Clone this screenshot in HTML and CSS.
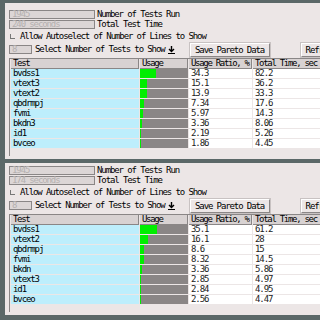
FILE: index.html
```html
<!DOCTYPE html>
<html lang="en">
<head>
    <meta charset="UTF-8">
    <title>Pareto</title>
    <link rel="stylesheet" href="styles.css">
</head>
<body>

    <div class="panel panel_first">
        <div class="info_row">
            <div class="entry entry_wide">1945</div>
            <span class="label">Number of Tests Run</span>
        </div>
        <div class="info_row">
            <div class="entry entry_wide">240 seconds</div>
            <span class="label">Total Test Time</span>
        </div>
        <div class="check_row">
            <span class="checkbox"></span>
            <span class="label">Allow Autoselect of Number of Lines to Show</span>
        </div>
        <div class="select_row">
            <div class="entry entry_small">8</div>
            <span class="label">Select Number of Tests to Show</span>
            <svg class="down_icon" width="7" height="8" viewBox="0 0 7 8"><path d="M3.5 0v5M1 3l2.5 2.5L6 3" stroke="#000" stroke-width="1.4" fill="none"/><path d="M0 7.5h7" stroke="#000" stroke-width="1"/></svg>
            <button class="btn save_btn">Save Pareto Data</button>
            <button class="btn ref_btn">Refresh</button>
        </div>
        <div class="table_frame">
            <div class="grid">
                <div class="head">Test</div><div class="head">Usage</div><div class="head">Usage Ratio, %</div><div class="head">Total Time, sec</div>
                <div class="name">bvdss1</div><div class="usage"><span class="bar" style="width:34.3%"></span></div><div class="num">34.3</div><div class="num">82.2</div>
                <div class="name">vtext3</div><div class="usage"><span class="bar" style="width:15.1%"></span></div><div class="num">15.1</div><div class="num">36.2</div>
                <div class="name">vtext2</div><div class="usage"><span class="bar" style="width:13.9%"></span></div><div class="num">13.9</div><div class="num">33.3</div>
                <div class="name">qbdrmpj</div><div class="usage"><span class="bar" style="width:7.34%"></span></div><div class="num">7.34</div><div class="num">17.6</div>
                <div class="name">fvmi</div><div class="usage"><span class="bar" style="width:5.97%"></span></div><div class="num">5.97</div><div class="num">14.3</div>
                <div class="name">bkdn3</div><div class="usage"><span class="bar" style="width:3.36%"></span></div><div class="num">3.36</div><div class="num">8.06</div>
                <div class="name">id1</div><div class="usage"><span class="bar" style="width:2.19%"></span></div><div class="num">2.19</div><div class="num">5.26</div>
                <div class="name">bvceo</div><div class="usage"><span class="bar" style="width:1.86%"></span></div><div class="num">1.86</div><div class="num">4.45</div>
            </div>
        </div>
    </div>

    <div class="panel panel_second">
        <div class="info_row">
            <div class="entry entry_wide">1945</div>
            <span class="label">Number of Tests Run</span>
        </div>
        <div class="info_row">
            <div class="entry entry_wide">174 seconds</div>
            <span class="label">Total Test Time</span>
        </div>
        <div class="check_row">
            <span class="checkbox"></span>
            <span class="label">Allow Autoselect of Number of Lines to Show</span>
        </div>
        <div class="select_row">
            <div class="entry entry_small">8</div>
            <span class="label">Select Number of Tests to Show</span>
            <svg class="down_icon" width="7" height="8" viewBox="0 0 7 8"><path d="M3.5 0v5M1 3l2.5 2.5L6 3" stroke="#000" stroke-width="1.4" fill="none"/><path d="M0 7.5h7" stroke="#000" stroke-width="1"/></svg>
            <button class="btn save_btn">Save Pareto Data</button>
            <button class="btn ref_btn">Refresh</button>
        </div>
        <div class="table_frame">
            <div class="grid">
                <div class="head">Test</div><div class="head">Usage</div><div class="head">Usage Ratio, %</div><div class="head">Total Time, sec</div>
                <div class="name">bvdss1</div><div class="usage"><span class="bar" style="width:35.1%"></span></div><div class="num">35.1</div><div class="num">61.2</div>
                <div class="name">vtext2</div><div class="usage"><span class="bar" style="width:16.1%"></span></div><div class="num">16.1</div><div class="num">28</div>
                <div class="name">qbdrmpj</div><div class="usage"><span class="bar" style="width:8.6%"></span></div><div class="num">8.6</div><div class="num">15</div>
                <div class="name">fvmi</div><div class="usage"><span class="bar" style="width:8.32%"></span></div><div class="num">8.32</div><div class="num">14.5</div>
                <div class="name">bkdn</div><div class="usage"><span class="bar" style="width:3.36%"></span></div><div class="num">3.36</div><div class="num">5.86</div>
                <div class="name">vtext3</div><div class="usage"><span class="bar" style="width:2.85%"></span></div><div class="num">2.85</div><div class="num">4.97</div>
                <div class="name">id1</div><div class="usage"><span class="bar" style="width:2.84%"></span></div><div class="num">2.84</div><div class="num">4.95</div>
                <div class="name">bvceo</div><div class="usage"><span class="bar" style="width:2.56%"></span></div><div class="num">2.56</div><div class="num">4.47</div>
            </div>
        </div>
    </div>

</body>
</html>
```

FILE: styles.css
```css
body {
    margin: 0;
    padding: 3px 0 0 5px;
    background: #5b6868;
    font-family: "DejaVu Sans Mono", monospace;
    font-size: 9px;
    letter-spacing: -1.1px;
    color: #000;
    height: 320px;
    overflow: hidden;
}

.panel {
    background: #ece6e6;
    display: flex;
    flex-direction: column;
    overflow: hidden;
}

.panel_first {
    padding: 6px 0 3px 4px;
    margin-bottom: 4px;
}

.panel_second {
    padding: 2px 0 3px 4px;
}

.info_row {
    display: flex;
    align-items: center;
    gap: 2px;
    height: 10px;
}

.entry {
    box-sizing: border-box;
    height: 9px;
    background: #dcd6d6;
    border: 1px solid #8a8686;
    color: #b4b0b0;
    line-height: 7px;
    padding-left: 2px;
    white-space: nowrap;
}

.entry_wide {
    width: 86px;
    flex: none;
}

.entry_small {
    width: 23px;
    flex: none;
}

.label {
    white-space: nowrap;
    line-height: 9px;
}

.check_row {
    display: flex;
    align-items: center;
    gap: 5px;
    height: 13px;
    margin-top: 1px;
    padding-left: 1px;
}

.checkbox {
    width: 4px;
    height: 4px;
    border-left: 1px solid #777;
    border-bottom: 1px solid #777;
}

.select_row {
    display: flex;
    align-items: center;
    height: 13px;
}

.select_row .label {
    margin-left: 3px;
}

.down_icon {
    margin-left: 3px;
    flex: none;
}

.btn {
    font-family: inherit;
    font-size: 9px;
    letter-spacing: -1.1px;
    height: 14px;
    padding: 0;
    background: #ece6e6;
    border: 1px solid;
    border-color: #fff #8a8686 #8a8686 #fff;
    box-shadow: 0 0 0 1px #c8c2c2;
    color: #000;
    white-space: nowrap;
    flex: none;
}

.save_btn {
    width: 80px;
    margin-left: 15px;
}

.ref_btn {
    width: 40px;
    margin-left: 31px;
    text-align: left;
    padding-left: 4px;
}

.table_frame {
    margin-top: 2px;
    border-left: 1px solid #8a8686;
    border-top: 1px solid #8a8686;
    padding: 0 0 8px 1px;
}

.panel_second .table_frame {
    padding-bottom: 8px;
}

.grid {
    display: grid;
    grid-template-columns: 128px 48px 63px 80px;
    grid-auto-rows: 9px;
    gap: 1px;
    width: 330px;
}

.grid > div {
    white-space: nowrap;
    overflow: hidden;
}

.head {
    background: #d8d2d2;
    border-right: 1px solid #8a8686;
    border-bottom: 1px solid #8a8686;
    line-height: 9px;
    padding-left: 2px;
    height: 10px;
    box-sizing: border-box;
    letter-spacing: -1.3px;
}

.name {
    background: #bdeefc;
    padding-left: 2px;
    line-height: 9px;
}

.usage {
    background: #8a8686;
    display: flex;
}

.bar {
    background: #00ee00;
    height: 100%;
}

.num {
    background: #fff;
    padding-left: 2px;
    line-height: 9px;
    color: #222;
}
```
